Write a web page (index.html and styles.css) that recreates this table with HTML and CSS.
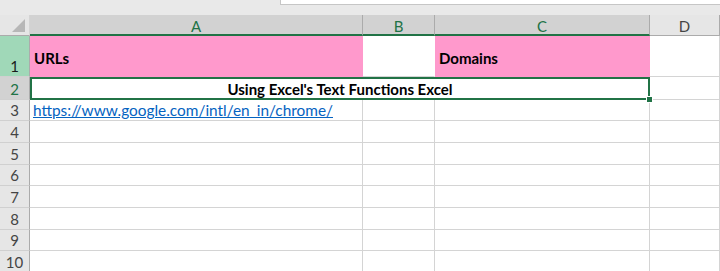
FILE: index.html
```html
<!DOCTYPE html>
<html>
  <head>
    <meta charset="UTF-8" />
    <title>Book1 - Excel</title>
    <link rel="stylesheet" href="styles.css">
  </head>
  <body>
    <div class="toolbar">
      <div class="formula-box"></div>
    </div>

    <div class="sheet">
      <div class="corner"><span class="corner-tri"></span></div>
      <div class="col-head selected">A</div>
      <div class="col-head selected">B</div>
      <div class="col-head selected">C</div>
      <div class="col-head">D</div>

      <div class="row-head active">1</div>
      <div class="cell pink bold">URLs</div>
      <div class="cell white"></div>
      <div class="cell pink bold">Domains</div>
      <div class="cell"></div>

      <div class="row-head selected">2</div>
      <div class="cell merged bold">Using Excel's Text Functions Excel<span class="fill-handle"></span></div>
      <div class="cell"></div>

      <div class="row-head">3</div>
      <div class="cell link">https://www.google.com/intl/en_in/chrome/</div>
      <div class="cell"></div>
      <div class="cell"></div>
      <div class="cell"></div>

      <div class="row-head">4</div>
      <div class="cell"></div><div class="cell"></div><div class="cell"></div><div class="cell"></div>
      <div class="row-head">5</div>
      <div class="cell"></div><div class="cell"></div><div class="cell"></div><div class="cell"></div>
      <div class="row-head">6</div>
      <div class="cell"></div><div class="cell"></div><div class="cell"></div><div class="cell"></div>
      <div class="row-head">7</div>
      <div class="cell"></div><div class="cell"></div><div class="cell"></div><div class="cell"></div>
      <div class="row-head">8</div>
      <div class="cell"></div><div class="cell"></div><div class="cell"></div><div class="cell"></div>
      <div class="row-head">9</div>
      <div class="cell"></div><div class="cell"></div><div class="cell"></div><div class="cell"></div>
      <div class="row-head">10</div>
      <div class="cell"></div><div class="cell"></div><div class="cell"></div><div class="cell"></div>
    </div>
  </body>
</html>
```

FILE: styles.css
```css
* {
  box-sizing: border-box;
  margin: 0;
  padding: 0;
}

body {
  background: #ffffff;
  font-family: Lato, "Open Sans", sans-serif;
  font-size: 15px;
  color: #000;
  overflow: hidden;
}

.toolbar {
  height: 15px;
  background: #e9e9e9;
  padding-left: 280px;
}

.formula-box {
  height: 5px;
  background: #fff;
  border-left: 1px solid #c6c6c6;
  border-bottom: 1px solid #c6c6c6;
}

.sheet {
  display: grid;
  grid-template-columns: 30px 333px 72px 215px 1fr;
  grid-template-rows: 21px 41px 23px 21px 22px 22px 21px 22px 22px 21px 22px;
}

/* headers */
.corner {
  position: relative;
  background: #e6e6e6;
  border-right: 1px solid #d4d4d4;
  border-bottom: 1px solid #ababab;
}

.corner-tri {
  position: absolute;
  right: 4px;
  bottom: 3px;
  width: 0;
  height: 0;
  border-left: 13px solid transparent;
  border-bottom: 13px solid #b7b7b7;
}

.col-head {
  display: flex;
  align-items: center;
  justify-content: center;
  background: #e6e6e6;
  color: #444;
  border-right: 1px solid #ababab;
  border-bottom: 1px solid #ababab;
  padding-top: 2px;
}

.col-head.selected {
  background: #d2d2d2;
  color: #217346;
  border-bottom: 2px solid #217346;
}

.row-head {
  display: flex;
  align-items: flex-end;
  justify-content: center;
  background: #e6e6e6;
  color: #444;
  border-right: 1px solid #ababab;
  border-bottom: 1px solid #d0d0d0;
  line-height: 20px;
}

.row-head.selected {
  background: #d2d2d2;
  color: #217346;
}

.row-head.active {
  background: #a0d8b8;
  color: #1a1a1a;
}

/* cells */
.cell {
  display: flex;
  align-items: center;
  padding-left: 4px;
  border-right: 1px solid #d4d4d4;
  border-bottom: 1px solid #d4d4d4;
  white-space: nowrap;
  overflow: visible;
}

.bold {
  font-weight: 700;
}

.pink {
  background: #ff99cc;
  border-color: #ff99cc;
  padding-top: 3px;
}

.white {
  border-right-color: #fff;
}

.link {
  align-items: flex-end;
  padding-bottom: 1px;
  padding-left: 3px;
  color: #0563c1;
  font-size: 15.4px;
  text-decoration: underline;
}

.merged {
  grid-column: 2 / 5;
  position: relative;
  justify-content: center;
  border: 2px solid #217346;
  padding-left: 0;
}

.fill-handle {
  position: absolute;
  right: -5px;
  bottom: -5px;
  width: 7px;
  height: 7px;
  background: #217346;
  border: 1px solid #fff;
}
```
